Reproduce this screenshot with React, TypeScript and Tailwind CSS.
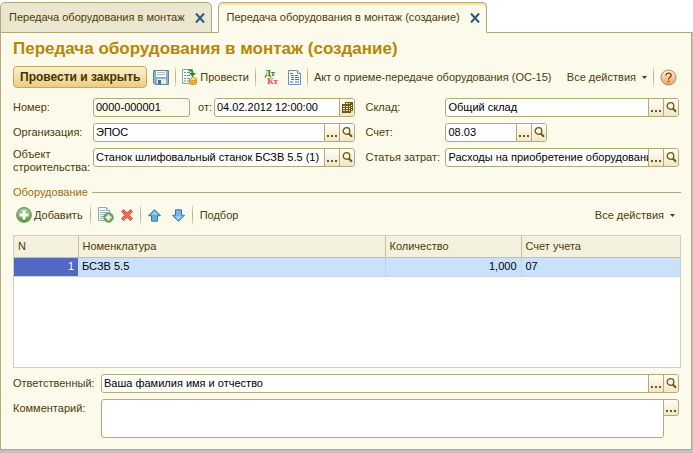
import { useState } from "react";
import type { ReactNode } from "react";

type Tab = { id: string; title: string };

const tabs: Tab[] = [
  { id: "list", title: "Передача оборудования в монтаж" },
  { id: "create", title: "Передача оборудования в монтаж (создание)" },
];

const rows = [{ n: 1, item: "БСЗВ 5.5", qty: "1,000", account: "07" }];

function CloseIcon() {
  return (
    <svg width="10" height="10" viewBox="0 0 10 10" fill="none">
      <path d="M1 .5L9 9.5M9 .5L1 9.5" stroke="#2a5a80" strokeWidth="2" />
    </svg>
  );
}

function SearchIcon() {
  return (
    <svg width="11" height="11" viewBox="0 0 11 11" fill="none" stroke="#6d5714">
      <circle cx="4.5" cy="4" r="3.3" strokeWidth="1.3" />
      <path d="M6.8 6.5L10 9.8" strokeWidth="2" />
    </svg>
  );
}

function DotsIcon() {
  return (
    <svg width="11" height="11" viewBox="0 0 11 11" fill="#6d5714">
      <path d="M0 8h2v2H0zM4 8h2v2H4zM8 8h2v2H8z" />
    </svg>
  );
}

function CalendarIcon() {
  return (
    <svg width="11" height="11" viewBox="0 0 11 11" shapeRendering="crispEdges">
      <path d="M3 0h8v9H9v2H0V2h3z" fill="#6d5714" />
      <path
        d="M1 4h2v1H1zM4 4h2v1H4zM7 4h1v1H7zM1 6h2v1H1zM4 6h2v1H4zM7 6h1v1H7zM1 8h2v1H1zM4 8h2v1H4zM7 8h1v1H7zM4 1h2v1H4zM7 1h1v1H7zM9 3h1v1H9zM9 5h1v1H9zM9 7h1v1H9z"
        fill="#f7f1d4"
      />
    </svg>
  );
}

function SaveIcon() {
  return (
    <svg width="16" height="16" viewBox="0 0 16 16">
      <path d="M.5 1.5h15v14H2L.5 14z" fill="#8fb0c8" stroke="#5f86a3" />
      <path d="M3 2h10v6H3z" fill="#f4f9fc" />
      <path d="M4 3.5h8M4 5.5h8" stroke="#a9c3d4" />
      <path d="M4 10h9v5H4z" fill="#e4edf2" />
      <path d="M5 11h3v4H5z" fill="#48708f" />
    </svg>
  );
}

function PostIcon() {
  return (
    <svg width="16" height="16" viewBox="0 0 16 16">
      <path d="M.5.5h10v14H.5z" fill="#f6fafc" stroke="#86a6b8" />
      <path d="M2 3.5h2M2 6.5h2M2 9.5h2M2 12h2M5 3.5h3M5 6.5h3M5 9.5h2M5 12h2" stroke="#668ca6" />
      <path d="M6.5 1.500c3-.6 4 .5 4 3" fill="none" stroke="#2d8a24" strokeWidth="2" />
      <path d="M7 4h7l-3.500 4z" fill="#2d8a24" />
      <path d="M7.500 10v4.500c0 1.500 7 1.500 7 0V10z" fill="#f1c33a" stroke="#c38b1d" strokeWidth=".8" />
      <ellipse cx="11" cy="10" rx="3.500" ry="1.400" fill="#ffe98b" stroke="#c38b1d" strokeWidth=".8" />
      <path d="M7.500 12.300c0 1.500 7 1.500 7 0" fill="none" stroke="#c38b1d" strokeWidth=".8" />
    </svg>
  );
}

function DebitCreditIcon() {
  return (
    <span className="flex w-4 flex-col font-['Liberation_Serif',serif] text-[9px] leading-[8px] font-bold">
      <span className="text-[#237a12]">Дт</span>
      <span className="self-end text-[#f0433b]">Кт</span>
    </span>
  );
}

function ReportIcon() {
  return (
    <svg width="13" height="15" viewBox="0 0 13 15">
      <path d="M.5.5h9l3 3v11H.5z" fill="#f2f8fc" stroke="#6f93ab" />
      <path d="M9.5.5v3h3" fill="#c9dce8" stroke="#6f93ab" />
      <path d="M2 3.5h3M3 5.5h3M7 5.5h3M3 7.5h3M7 7.5h4M3 9.5h3M7 9.5h4M2 12h3M7 12h4" stroke="#4b7896" />
    </svg>
  );
}

function AddIcon() {
  return (
    <svg width="16" height="16" viewBox="0 0 16 16">
      <defs>
        <linearGradient id="add" x1="0" y1="0" x2="0" y2="1">
          <stop stopColor="#b4d2a4" />
          <stop offset="1" stopColor="#4b983a" />
        </linearGradient>
      </defs>
      <circle cx="8" cy="8" r="7.3" fill="url(#add)" stroke="#77936a" strokeWidth="1.2" />
      <path d="M6.5 3.5h3v3h3v3h-3v3h-3v-3h-3v-3h3z" fill="#fff" />
    </svg>
  );
}

function CopyIcon() {
  return (
    <svg width="16" height="16" viewBox="0 0 16 16">
      <path d="M.5.5h8l3 3v10H.5z" fill="#f4f9fc" stroke="#8caabc" />
      <path d="M8.5.5v3h3" fill="#d7e5ee" stroke="#8caabc" />
      <path d="M2 3.5h5M2 5.5h7M2 7.5h5M2 9.5h4M2 11.5h3" stroke="#9db9ca" />
      <circle cx="10.5" cy="10.5" r="4.7" fill="#6da65a" stroke="#668d56" />
      <path d="M9.5 7.5h2v2h2v2h-2v2h-2v-2h-2v-2h2z" fill="#fff" />
    </svg>
  );
}

function DeleteIcon() {
  return (
    <svg width="12" height="12" viewBox="0 0 12 12">
      <path d="M2.5.5L6 3.8 9.5.5l2 2L8.2 6l3.3 3.5-2 2L6 8.2l-3.5 3.3-2-2L3.8 6 .5 2.5z" fill="#f0685a" stroke="#d64336" strokeWidth=".8" />
    </svg>
  );
}

function ArrowIcon({ down = false }: { down?: boolean }) {
  return (
    <svg width="13" height="13" viewBox="0 0 13 13" className={down ? "rotate-180" : ""}>
      <path d="M6.5.7l6 6H9.500v5.500h-6V6.700h-3z" fill={down ? "#6fb9ea" : "#62aee2"} stroke="#3c76a5" strokeLinejoin="round" />
      <path d="M6.5 2.5l3 3h-6z" fill="#a8daf7" />
    </svg>
  );
}

function HelpIcon() {
  return (
    <svg width="17" height="17" viewBox="0 0 17 17">
      <defs>
        <linearGradient id="help" x1="0" y1="0" x2="0" y2="1">
          <stop stopColor="#fdeedd" />
          <stop offset="1" stopColor="#f0a65b" />
        </linearGradient>
      </defs>
      <circle cx="8.5" cy="8.5" r="7.5" fill="url(#help)" stroke="#a98a6a" />
      <path d="M6 6.500c0-3.200 5.200-3 5.200 0 0 1.900-2.600 1.700-2.600 4" fill="none" stroke="#73461c" strokeWidth="1.300" />
      <path d="M7.800 11.700h1.600v1.500H7.800z" fill="#73461c" />
    </svg>
  );
}

function Separator() {
  return <span className="h-5 w-px bg-linear-to-b from-[#e8e1c0] via-[#b5aa7c] to-[#e8e1c0]" />;
}

function AllActions() {
  return (
    <button className="flex items-center gap-1.5 whitespace-nowrap">
      Все действия
      <svg width="5" height="3" viewBox="0 0 5 3" fill="#4d3b08">
        <path d="M0 0h5L2.5 3z" />
      </svg>
    </button>
  );
}

function FieldButton({ label, children }: { label: string; children: ReactNode }) {
  return (
    <button
      aria-label={label}
      className="flex w-[15px] shrink-0 items-center justify-center border-l border-[#b3a97c] bg-linear-to-b from-[#fffef8] to-[#eee7c8]"
    >
      {children}
    </button>
  );
}

type FieldProps = {
  id: string;
  value: string;
  className?: string;
  readOnly?: boolean;
  select?: boolean;
  calendar?: boolean;
};

function Field({ id, value, className = "flex-1", readOnly, select, calendar }: FieldProps) {
  return (
    <div className={`flex h-[19px] min-w-0 overflow-hidden rounded-[3px] border border-[#b3a97c] ${readOnly ? "bg-[#fcfaeb]" : "bg-white"} ${className}`}>
      <input
        id={id}
        defaultValue={value}
        readOnly={readOnly}
        className="w-0 min-w-0 flex-1 bg-transparent pl-0.5 text-black outline-none"
      />
      {select && (
        <>
          <FieldButton label="Выбрать"><DotsIcon /></FieldButton>
          <FieldButton label="Открыть"><SearchIcon /></FieldButton>
        </>
      )}
      {calendar && <FieldButton label="Календарь"><CalendarIcon /></FieldButton>}
    </div>
  );
}

export default function App() {
  const [active, setActive] = useState("create");

  return (
    <div className="bg-[#c0c0c0] pr-px pb-1 font-['Liberation_Sans',Arial,sans-serif] text-[11px] leading-[13px] text-[#4d3b08]">
      {/* Tabs */}
      <div className="-mr-px flex items-end gap-1.5 bg-white pt-0.5">
        {tabs.map((tab) => (
          <div
            key={tab.id}
            className={`z-10 -mb-px flex h-[31px] items-center gap-2.5 rounded-t-[5px] border border-[#b3a97c] pr-1.5 pl-2 ${
              tab.id === active ? "border-b-[#fcfaeb] bg-[#fcfaeb] shadow-[inset_0_2px_0_#fbe3ad]" : "bg-[#ebe6cf]"
            }`}
          >
            <button onClick={() => setActive(tab.id)} className="whitespace-nowrap">{tab.title}</button>
            <button aria-label="Закрыть"><CloseIcon /></button>
          </div>
        ))}
      </div>

      <main className="border border-[#b3a97c] bg-[#fcfaeb] pt-1.5 pr-2.5 pb-[11px] pl-3">
        <h1 className="text-[17px] leading-5 font-bold text-[#b78608]">Передача оборудования в монтаж (создание)</h1>

        <div className="mt-[7px] mr-1 flex h-[22px] items-center gap-1.5">
          <button className="h-[22px] rounded-[4px] border border-[#c7a75c] bg-linear-to-b from-[#fdf1d0] to-[#eecb80] px-1.5 text-[12px] font-bold whitespace-nowrap text-[#443304]">
            Провести и закрыть
          </button>
          <button aria-label="Записать"><SaveIcon /></button>
          <Separator />
          <button className="flex items-center gap-0.5"><PostIcon />Провести</button>
          <Separator />
          <button aria-label="Проводки"><DebitCreditIcon /></button>
          <button aria-label="Отчет" className="pl-1"><ReportIcon /></button>
          <Separator />
          <button className="whitespace-nowrap">Акт о приеме-передаче оборудования (ОС-15)</button>
          <div className="ml-auto flex items-center gap-1.5">
            <AllActions />
            <Separator />
            <button aria-label="Справка"><HelpIcon /></button>
          </div>
        </div>

        <div className="mt-2.5 mr-0.5 grid grid-cols-[343fr_314fr] gap-x-2.5 gap-y-1.5">
          <div className="flex items-center">
            <label htmlFor="number" className="w-20 shrink-0">Номер:</label>
            <Field id="number" value="0000-000001" readOnly className="w-[97px]" />
            <label htmlFor="date" className="mr-0.5 ml-2">от:</label>
            <Field id="date" value="04.02.2012 12:00:00" calendar />
          </div>
          <div className="flex items-center">
            <label htmlFor="store" className="w-20 shrink-0">Склад:</label>
            <Field id="store" value="Общий склад" select />
          </div>
          <div className="flex items-center">
            <label htmlFor="org" className="w-20 shrink-0">Организация:</label>
            <Field id="org" value="ЭПОС" select />
          </div>
          <div className="flex items-center">
            <label htmlFor="account" className="w-20 shrink-0">Счет:</label>
            <Field id="account" value="08.03" select className="w-[102px]" />
          </div>
          <div className="flex items-start">
            <label htmlFor="object" className="w-20 shrink-0">Объект строительства:</label>
            <Field id="object" value="Станок шлифовальный станок БСЗВ 5.5 (1)" select />
          </div>
          <div className="flex items-start">
            <label htmlFor="cost" className="w-20 shrink-0 leading-[19px]">Статья затрат:</label>
            <Field id="cost" value="Расходы на приобретение оборудования" select />
          </div>
        </div>

        <section className="mt-3">
          <h2 className="flex items-center gap-1 text-[#a06d10] after:h-px after:flex-1 after:bg-[#b3a97c]">
            Оборудование
          </h2>
          <div className="mt-1.5 mr-1.5 flex h-5 items-center gap-[7px] pl-[3px]">
            <button className="flex items-center gap-0.5"><AddIcon />Добавить</button>
            <Separator />
            <button aria-label="Скопировать"><CopyIcon /></button>
            <button aria-label="Удалить"><DeleteIcon /></button>
            <Separator />
            <button aria-label="Вверх"><ArrowIcon /></button>
            <button aria-label="Вниз" className="pl-1"><ArrowIcon down /></button>
            <Separator />
            <button>Подбор</button>
            <div className="ml-auto"><AllActions /></div>
          </div>

          <div className="mt-2.5 h-[133px] border border-[#cfcfc8] bg-white">
            <table className="w-full table-fixed border-collapse text-left">
              <thead>
                <tr className="h-[21px] border-b border-[#c9bf98] bg-[#f4f0de]">
                  <th className="w-16 border-r border-[#c9bf98] px-1 font-normal">N</th>
                  <th className="border-r border-[#c9bf98] px-1 font-normal">Номенклатура</th>
                  <th className="w-[136px] border-r border-[#c9bf98] px-1 font-normal">Количество</th>
                  <th className="w-[159px] px-1 font-normal">Счет учета</th>
                </tr>
              </thead>
              <tbody>
                {rows.map((row) => (
                  <tr key={row.n} className="h-[19px] border-b border-[#cbd3da] bg-[#c8e1fd] text-black">
                    <td className="bg-[#506ac2] px-1 text-right text-white">{row.n}</td>
                    <td className="border-r border-[#bdd2e6] px-1">{row.item}</td>
                    <td className="border-r border-[#bdd2e6] px-1 text-right">{row.qty}</td>
                    <td className="px-1">{row.account}</td>
                  </tr>
                ))}
              </tbody>
            </table>
          </div>
        </section>

        <div className="mt-1.5 mr-0.5 flex items-center">
          <label htmlFor="person" className="w-[88px] shrink-0">Ответственный:</label>
          <Field id="person" value="Ваша фамилия имя и отчество" select />
        </div>
        <div className="mt-1.5 mr-0.5 flex items-start">
          <label htmlFor="comment" className="w-[88px] shrink-0 leading-[19px]">Комментарий:</label>
          <textarea
            id="comment"
            className="h-[39px] min-w-0 flex-1 resize-none rounded-[3px] rounded-tr-none border border-[#b3a97c] bg-white px-0.5 text-black outline-none"
          />
          <button
            aria-label="Выбрать"
            className="-ml-px flex h-[17px] w-4 items-center justify-center rounded-r-[3px] border border-[#b3a97c] bg-linear-to-b from-[#fffef8] to-[#eee7c8]"
          >
            <DotsIcon />
          </button>
        </div>
      </main>
    </div>
  );
}
